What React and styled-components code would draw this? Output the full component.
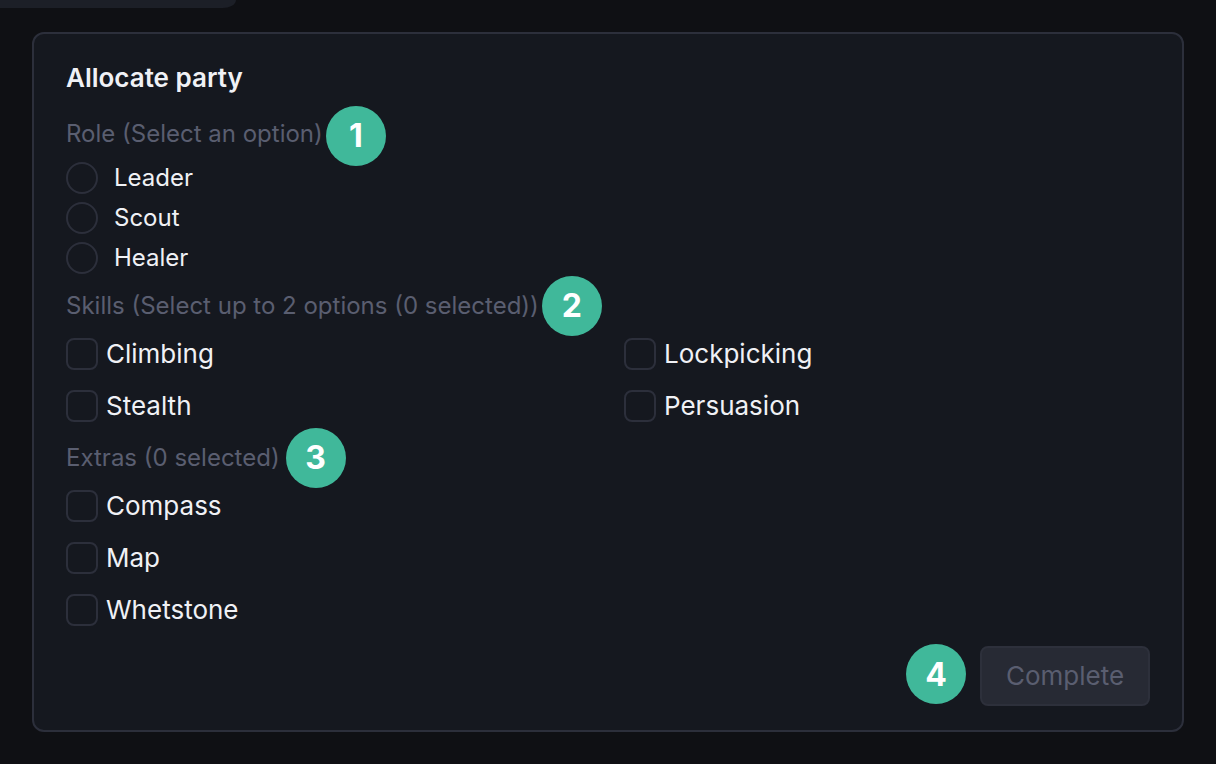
import React from 'react';
import styled, { createGlobalStyle } from 'styled-components';

const GlobalStyle = createGlobalStyle`
html, body {
  margin: 0;
  padding: 0;
  height: 100%;
  background: #0f1014;
}
* {
  box-sizing: border-box;
}
`

const Page = styled.div`
width: 1216px;
height: 764px;
overflow: hidden;
background: #0f1014;
font-family: Inter, "Liberation Sans", sans-serif;
`
const TopStub = styled.div`
width: 236px;
height: 8px;
background: #1c1f27;
border-bottom-right-radius: 24px 14px;
margin-bottom: 24px;
`
const Panel = styled.section`
width: 1152px;
height: 700px;
margin-left: 32px;
padding: 28px 32px 24px;
background: #15181f;
border: 2px solid #2c2f3b;
border-radius: 12px;
display: flex;
flex-direction: column;
`
const Title = styled.h2`
margin: 0;
font-size: 26px;
line-height: 32px;
font-weight: 600;
color: #f0f1f5;
`
const Label = styled.div`
position: relative;
align-self: flex-start;
margin-top: ${props => props.$top}px;
font-size: 24px;
line-height: 32px;
color: #5a5e70;
`
const Badge = styled.span`
display: flex;
align-items: center;
justify-content: center;
width: 60px;
height: 60px;
border-radius: 50%;
background: #40b89a;
color: #ffffff;
font-size: 32px;
font-weight: 700;
`
const LabelBadge = styled(Badge)`
position: absolute;
left: 100%;
top: ${props => props.$y}px;
margin-left: ${props => props.$x}px;
`
const RadioList = styled.div`
margin-top: 12px;
display: flex;
flex-direction: column;
gap: 8px;
`
const Option = styled.label`
display: flex;
align-items: center;
gap: ${props => props.$gap}px;
height: 32px;
font-size: ${props => props.$size}px;
line-height: 30px;
color: #f0f1f5;
`
const Radio = styled.span`
width: 32px;
height: 32px;
border: 2px solid #2c2f3b;
border-radius: 50%;
`
const Checkbox = styled.span`
width: 32px;
height: 32px;
border: 2px solid #2c2f3b;
border-radius: 8px;
`
const CheckGrid = styled.div`
margin-top: 16px;
display: grid;
grid-template-columns: ${props => props.$columns};
column-gap: 32px;
row-gap: 20px;
`
const Footer = styled.div`
margin-top: 20px;
display: flex;
justify-content: flex-end;
gap: 14px;
`
const FooterBadge = styled(Badge)`
margin-top: -2px;
`
const Button = styled.button`
width: 170px;
height: 60px;
padding: 0 0 2px;
background: #272a34;
border: 2px solid #2d303b;
border-radius: 8px;
color: #5a5e70;
font-family: inherit;
font-size: 26px;
`

function Check({ children }) {
  return <Option $gap={8} $size={26}><Checkbox /><span>{children}</span></Option>
}

function RadioOption({ children }) {
  return <Option $gap={16} $size={24}><Radio /><span>{children}</span></Option>
}

export default function App() {
  return (
    <Page>
      <GlobalStyle />
      <TopStub />
      <Panel>
        <Title>Allocate party</Title>
        <Label $top={24}>
          Role (Select an option)
          <LabelBadge $x={3} $y={-12}>1</LabelBadge>
        </Label>
        <RadioList>
          <RadioOption>Leader</RadioOption>
          <RadioOption>Scout</RadioOption>
          <RadioOption>Healer</RadioOption>
        </RadioList>
        <Label $top={16}>
          Skills (Select up to 2 options (0 selected))
          <LabelBadge $x={3} $y={-14}>2</LabelBadge>
        </Label>
        <CheckGrid $columns="1fr 1fr">
          <Check>Climbing</Check>
          <Check>Lockpicking</Check>
          <Check>Stealth</Check>
          <Check>Persuasion</Check>
        </CheckGrid>
        <Label $top={20}>
          Extras (0 selected)
          <LabelBadge $x={6} $y={-14}>3</LabelBadge>
        </Label>
        <CheckGrid $columns="1fr">
          <Check>Compass</Check>
          <Check>Map</Check>
          <Check>Whetstone</Check>
        </CheckGrid>
        <Footer>
          <FooterBadge>4</FooterBadge>
          <Button disabled>Complete</Button>
        </Footer>
      </Panel>
    </Page>
  )
}
